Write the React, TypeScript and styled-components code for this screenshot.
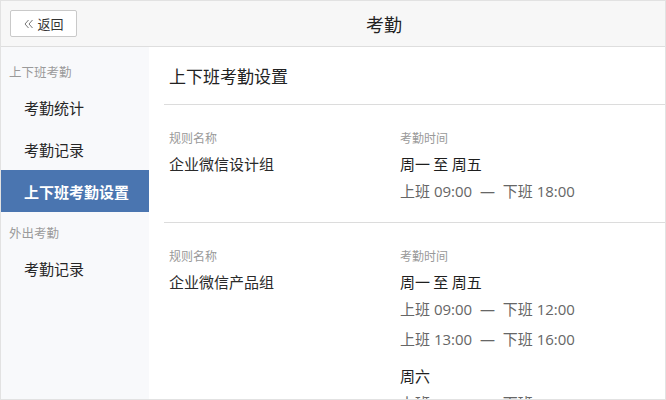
import { createGlobalStyle, styled } from 'styled-components';

interface Schedule {
  days: string,
  times: string[][],
}

interface Rule {
  name: string,
  schedules: Schedule[],
}

const rules: Rule[] = [
  {
    name: '企业微信设计组',
    schedules: [{ days: '周一 至 周五', times: [['09:00', '18:00']] }],
  },
  {
    name: '企业微信产品组',
    schedules: [
      { days: '周一 至 周五', times: [['09:00', '12:00'], ['13:00', '16:00']] },
      { days: '周六', times: [['09:00', '12:00']] },
    ],
  },
]

const GlobalStyle = createGlobalStyle`
  html, body {
    margin: 0;
    padding: 0;
    background: #fff;
  }
  body {
    font-family: "Noto Sans CJK SC", "Liberation Sans", sans-serif;
  }
`

const Frame = styled.div`
  width: 666px;
  height: 400px;
  box-sizing: border-box;
  border: 1px solid #e2e2e2;
  display: flex;
  flex-direction: column;
  overflow: hidden;
  background: #fff;
`

const Header = styled.header`
  height: 45px;
  flex-shrink: 0;
  display: flex;
  align-items: center;
  padding: 0 9px;
  background: #f7f7f7;
  border-bottom: 1px solid #dedede;
`

const BackButton = styled.button`
  width: 67px;
  height: 27px;
  display: flex;
  align-items: center;
  justify-content: center;
  gap: 4px;
  padding: 0 0 0 1px;
  background: #fff;
  border: 1px solid #c9c9c9;
  border-radius: 2px;
  font-family: inherit;
  font-size: 13px;
  color: #333;
  cursor: pointer;
`

const Title = styled.h1`
  flex: 1;
  margin: 0;
  padding-left: 35px;
  text-align: center;
  font-size: 18px;
  font-weight: 400;
  color: #222;
`

const Body = styled.div`
  flex: 1;
  display: flex;
  min-height: 0;
`

const Sidebar = styled.nav`
  width: 148px;
  flex-shrink: 0;
  padding-top: 4px;
  background: #f8f9fb;
`

const GroupLabel = styled.div`
  padding: 12px 8px 5px;
  line-height: 18px;
  font-size: 12.5px;
  color: #9a9a9a;
`

const NavItem = styled.div<{ $active?: boolean }>`
  height: 42px;
  display: flex;
  align-items: center;
  padding-left: 23px;
  font-size: 15px;
  font-weight: ${({ $active }) => ($active ? 700 : 400)};
  color: ${({ $active }) => ($active ? '#fff' : '#262626')};
  background: ${({ $active }) => ($active ? '#4a75b0' : 'transparent')};
`

const Content = styled.main`
  flex: 1;
  overflow: hidden;
`

const SectionTitle = styled.h2`
  margin: 0;
  padding: 19px 20px 18px;
  line-height: 20px;
  font-size: 17px;
  font-weight: 400;
  color: #222;
`

const RuleRow = styled.section`
  margin-left: 15px;
  padding: 24px 0 16px 5px;
  border-top: 1px solid #dcdcdc;
  display: grid;
  grid-template-columns: 231px 1fr;
`

const Label = styled.div`
  line-height: 18px;
  font-size: 12px;
  color: #999;
`

const Value = styled.div`
  margin-top: 5px;
  line-height: 24px;
  font-size: 15px;
  color: #2a2a2a;
`

const Days = styled.div<{ $first?: boolean }>`
  margin-top: ${({ $first }) => ($first ? '5px' : '10px')};
  line-height: 24px;
  font-size: 15px;
  color: #1e1e1e;
`

const TimeLine = styled.div`
  line-height: 30px;
  font-family: "Open Sans", "Noto Sans CJK SC", sans-serif;
  font-size: 15px;
  color: #666;
  white-space: pre;
`

function ChevronsIcon() {
  return (
    <svg width="9" height="10" viewBox="0 0 9 10" fill="none" stroke="#777" strokeWidth="1">
      <path d="M4.5 1 L1 5 L4.5 9" />
      <path d="M8.5 1 L5 5 L8.5 9" />
    </svg>
  )
}

export default function App() {
  return (
    <>
      <GlobalStyle />
      <Frame>
        <Header>
          <BackButton>
            <ChevronsIcon />
            返回
          </BackButton>
          <Title>考勤</Title>
        </Header>
        <Body>
          <Sidebar>
            <GroupLabel>上下班考勤</GroupLabel>
            <NavItem>考勤统计</NavItem>
            <NavItem>考勤记录</NavItem>
            <NavItem $active>上下班考勤设置</NavItem>
            <GroupLabel>外出考勤</GroupLabel>
            <NavItem>考勤记录</NavItem>
          </Sidebar>
          <Content>
            <SectionTitle>上下班考勤设置</SectionTitle>
            {rules.map((rule, index) => (
              <RuleRow key={index}>
                <div>
                  <Label>规则名称</Label>
                  <Value>{rule.name}</Value>
                </div>
                <div>
                  <Label>考勤时间</Label>
                  {rule.schedules.map((schedule, i) => (
                    <div key={i}>
                      <Days $first={i === 0}>{schedule.days}</Days>
                      {schedule.times.map(([start, end], j) => (
                        <TimeLine key={j}>{`上班 ${start}  —  下班 ${end}`}</TimeLine>
                      ))}
                    </div>
                  ))}
                </div>
              </RuleRow>
            ))}
          </Content>
        </Body>
      </Frame>
    </>
  )
}
